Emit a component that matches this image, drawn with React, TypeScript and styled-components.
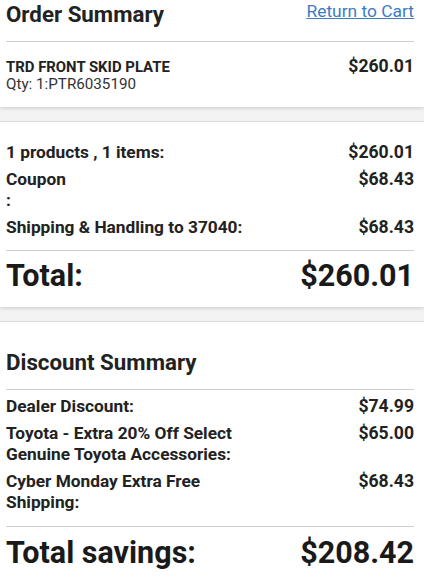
import React from "react";
import styled, { createGlobalStyle } from "styled-components";

const Global = createGlobalStyle`
  html, body { margin: 0; padding: 0; background: #f3f3f3; }
  body { font-family: Roboto, "Liberation Sans", Arial, sans-serif; color: #222; }
`;

const Page = styled.div`
  display: flex;
  flex-direction: column;
  gap: 14px;
  width: 424px;
`;

const Card = styled.section<{ $first?: boolean }>`
  background: #fff;
  padding: 0 10px 0 6px;
  border-top: ${(p) => (p.$first ? "none" : "1px solid #dcdcdc")};
  box-shadow: 0 2px 3px rgba(0, 0, 0, 0.12);
`;

const Header = styled.div`
  display: flex;
  justify-content: space-between;
  align-items: flex-start;
  padding-bottom: 13px;
  border-bottom: 1px solid #cfcfcf;
`;

const Title = styled.h2`
  margin: 0;
  font-size: 22.3px;
  line-height: 28px;
  font-weight: 700;
  color: #222;
`;

const CartLink = styled.a`
  font-size: 17.4px;
  line-height: 20px;
  margin-top: 1px;
  color: #3b7cc4;
  text-decoration: underline;
`;

const ItemRow = styled.div`
  display: flex;
  justify-content: space-between;
  align-items: baseline;
  padding: 13.5px 0 15px;
`;

const ItemInfo = styled.div`
  display: flex;
  flex-direction: column;
`;

const ItemName = styled.div`
  font-size: 14.9px;
  line-height: 18px;
  font-weight: 700;
  color: #222;
`;

const ItemQty = styled.div`
  font-size: 15.2px;
  line-height: 16px;
  color: #333;
`;

const Rows = styled.div<{ $top: number }>`
  display: flex;
  flex-direction: column;
  gap: 6px;
  padding: ${(p) => p.$top}px 0 12.5px;
  border-bottom: 1px solid #cfcfcf;
`;

const Row = styled.div`
  display: flex;
  justify-content: space-between;
  align-items: flex-start;
  gap: 12px;
`;

const Label = styled.div<{ $width?: number }>`
  font-size: 17.3px;
  line-height: 21px;
  font-weight: 700;
  color: #222;
  max-width: ${(p) => (p.$width ? `${p.$width}px` : "none")};
`;

const Amount = styled.div`
  font-size: 17.6px;
  line-height: 21px;
  font-weight: 700;
  color: #222;
  white-space: nowrap;
`;

const TotalRow = styled.div<{ $pad: string }>`
  display: flex;
  justify-content: space-between;
  align-items: center;
  padding: ${(p) => p.$pad};
`;

const TotalText = styled.div`
  font-size: 30.5px;
  line-height: 36px;
  font-weight: 700;
  color: #1a1a1a;
`;

const DiscountHead = styled.div`
  padding: 26px 0 12.5px;
  border-bottom: 1px solid #cfcfcf;
`;

export default function App() {
  return (
    <>
      <Global />
      <Page>
        <Card $first>
          <Header>
            <Title>Order Summary</Title>
            <CartLink href="#">Return to Cart</CartLink>
          </Header>
          <ItemRow>
            <ItemInfo>
              <ItemName>TRD FRONT SKID PLATE</ItemName>
              <ItemQty>Qty: 1:PTR6035190</ItemQty>
            </ItemInfo>
            <Amount>$260.01</Amount>
          </ItemRow>
        </Card>
        <Card>
          <Rows $top={20}>
            <Row>
              <Label>1 products , 1 items:</Label>
              <Amount>$260.01</Amount>
            </Row>
            <Row>
              <Label $width={80}>
                Coupon
                <br />:
              </Label>
              <Amount>$68.43</Amount>
            </Row>
            <Row>
              <Label>Shipping &amp; Handling to 37040:</Label>
              <Amount>$68.43</Amount>
            </Row>
          </Rows>
          <TotalRow $pad="7px 0 13px">
            <TotalText>Total:</TotalText>
            <TotalText>$260.01</TotalText>
          </TotalRow>
        </Card>
        <Card>
          <DiscountHead>
            <Title>Discount Summary</Title>
          </DiscountHead>
          <Rows $top={6.5}>
            <Row>
              <Label>Dealer Discount:</Label>
              <Amount>$74.99</Amount>
            </Row>
            <Row>
              <Label $width={250}>Toyota - Extra 20% Off Select Genuine Toyota Accessories:</Label>
              <Amount>$65.00</Amount>
            </Row>
            <Row>
              <Label $width={230}>Cyber Monday Extra Free Shipping:</Label>
              <Amount>$68.43</Amount>
            </Row>
          </Rows>
          <TotalRow $pad="8px 0 13px">
            <TotalText>Total savings:</TotalText>
            <TotalText>$208.42</TotalText>
          </TotalRow>
        </Card>
      </Page>
    </>
  );
}
